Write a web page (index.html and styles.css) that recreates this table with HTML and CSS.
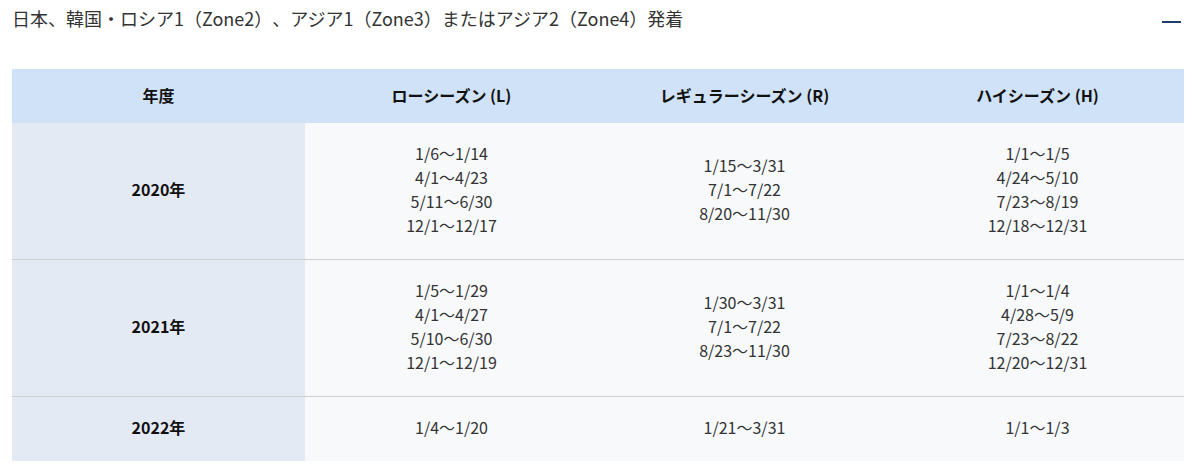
FILE: index.html
```html
<!DOCTYPE html>
<html lang="ja">
<head>
<meta charset="utf-8">
<link rel="stylesheet" href="styles.css">
</head>
<body>
<div class="page">
  <div class="head">
    <p class="title">日本、韓国・ロシア1（Zone2）、アジア1（Zone3）またはアジア2（Zone4）発着</p>
    <span class="toggle" aria-label="閉じる"></span>
  </div>
  <table class="season">
    <thead>
      <tr>
        <th>年度</th>
        <th>ローシーズン (L)</th>
        <th>レギュラーシーズン (R)</th>
        <th>ハイシーズン (H)</th>
      </tr>
    </thead>
    <tbody>
      <tr>
        <th>2020年</th>
        <td>1/6〜1/14<br>4/1〜4/23<br>5/11〜6/30<br>12/1〜12/17</td>
        <td>1/15〜3/31<br>7/1〜7/22<br>8/20〜11/30</td>
        <td>1/1〜1/5<br>4/24〜5/10<br>7/23〜8/19<br>12/18〜12/31</td>
      </tr>
      <tr>
        <th>2021年</th>
        <td>1/5〜1/29<br>4/1〜4/27<br>5/10〜6/30<br>12/1〜12/19</td>
        <td>1/30〜3/31<br>7/1〜7/22<br>8/23〜11/30</td>
        <td>1/1〜1/4<br>4/28〜5/9<br>7/23〜8/22<br>12/20〜12/31</td>
      </tr>
      <tr>
        <th>2022年</th>
        <td>1/4〜1/20</td>
        <td>1/21〜3/31</td>
        <td>1/1〜1/3</td>
      </tr>
    </tbody>
  </table>
</div>
</body>
</html>
```
FILE: styles.css
```css
* { box-sizing: border-box; }
html, body { margin: 0; padding: 0; background: #fff; }
body {
  font-family: "Noto Sans CJK JP", "Noto Sans", sans-serif;
  color: #333;
  font-size: 16px;
  text-spacing-trim: space-all;
}
.page {
  padding: 5px 16px 0 12px;
}
.head {
  display: flex;
  align-items: flex-start;
  justify-content: space-between;
  height: 64px;
}
.title {
  margin: 0;
  font-size: 18px;
  line-height: 27px;
  color: #333;
  text-spacing-trim: space-all;
}
.toggle {
  display: block;
  width: 19px;
  height: 2px;
  background: #1d3f70;
  margin-top: 16px;
  margin-right: 3px;
}
.season {
  width: 1172px;
  border-collapse: collapse;
  table-layout: fixed;
}
.season th, .season td {
  width: 25%;
  text-align: center;
  vertical-align: middle;
  line-height: 24px;
  padding: 18px 8px 22px;
}
.season thead th {
  background: #cfe2f7;
  font-weight: bold;
  font-size: 16px;
  color: #111;
  padding: 14px 8px 16px;
}
.season tbody th {
  background: #e4eaf3;
  font-weight: bold;
  font-size: 16px;
  color: #111;
}
.season tbody td {
  background: #f7f9fb;
  font-size: 16px;
  color: #333;
}
.season tbody tr + tr th,
.season tbody tr + tr td {
  border-top: 1px solid #d0d0d0;
}
```
